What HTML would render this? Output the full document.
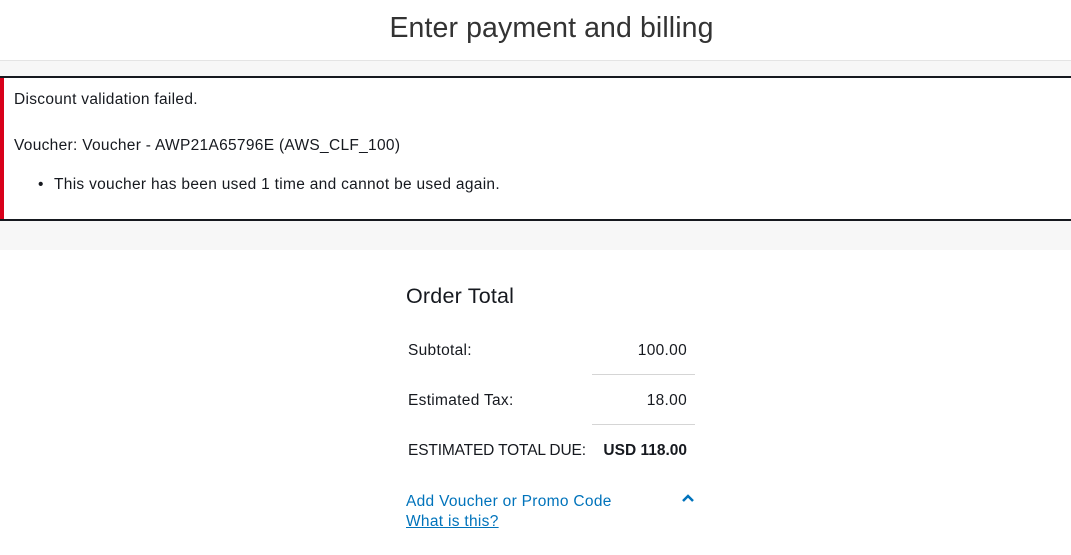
<!DOCTYPE html>
<html><head><style>
body{margin:0;width:1071px;height:555px;overflow:hidden;font-family:"Liberation Sans",Arial,sans-serif;color:#16191f;background:#fff}
.hdr{height:60px;border-bottom:1px solid #e4e4e4;text-align:center;font-size:28.5px;line-height:56px;color:#333;letter-spacing:.1px;padding-left:32px;box-sizing:content-box}
.gray{position:absolute;top:61px;left:0;width:1071px;height:189px;background:#f7f7f7}
.alert{position:absolute;top:76px;left:0;width:1071px;height:141px;background:#fff;border-top:2px solid #16191f;border-bottom:2px solid #16191f}
.red{position:absolute;left:0;top:0;bottom:0;width:4px;background:#d8001a}
.t{position:absolute;left:14px;font-size:15.5px;letter-spacing:.3px}
.ot{position:absolute;left:406px;top:284px;font-size:21.5px;letter-spacing:.2px}
.r{position:absolute;font-size:15.5px;letter-spacing:.3px}
.rr{position:absolute;right:384px;font-size:15.5px;letter-spacing:.3px}
.line{position:absolute;left:592px;width:103px;height:1px;background:#d5d5d5}
a{color:#0073bb;text-decoration:none}
</style></head><body>
<div class="hdr">Enter payment and billing</div>
<div class="gray"></div>
<div class="alert"><div class="red"></div>
<div class="t" style="top:13px">Discount validation failed.</div>
<div class="t" style="top:59px">Voucher: Voucher - AWP21A65796E (AWS_CLF_100)</div>
<div class="t" style="top:98px;left:38px">•</div>
<div class="t" style="top:98px;left:54px">This voucher has been used 1 time and cannot be used again.</div>
</div>
<div class="ot">Order Total</div>
<div class="r" style="left:408px;top:342px">Subtotal:</div>
<div class="rr" style="top:342px">100.00</div>
<div class="line" style="top:374px"></div>
<div class="r" style="left:408px;top:392px">Estimated Tax:</div>
<div class="rr" style="top:392px">18.00</div>
<div class="line" style="top:424px"></div>
<div class="r" style="left:408px;top:442px;letter-spacing:-.15px">ESTIMATED TOTAL DUE:</div>
<div class="rr" style="top:442px;font-weight:bold;letter-spacing:0">USD 118.00</div>
<div class="r" style="left:406px;top:493px"><a>Add Voucher or Promo Code</a></div>
<div class="r" style="left:406px;top:513px"><a style="text-decoration:underline">What is this?</a></div>
<svg style="position:absolute;left:681px;top:493px" width="14" height="10"><path d="M2 8L7 3L12 8" stroke="#0073bb" stroke-width="2.5" fill="none"/></svg>
</body></html>
